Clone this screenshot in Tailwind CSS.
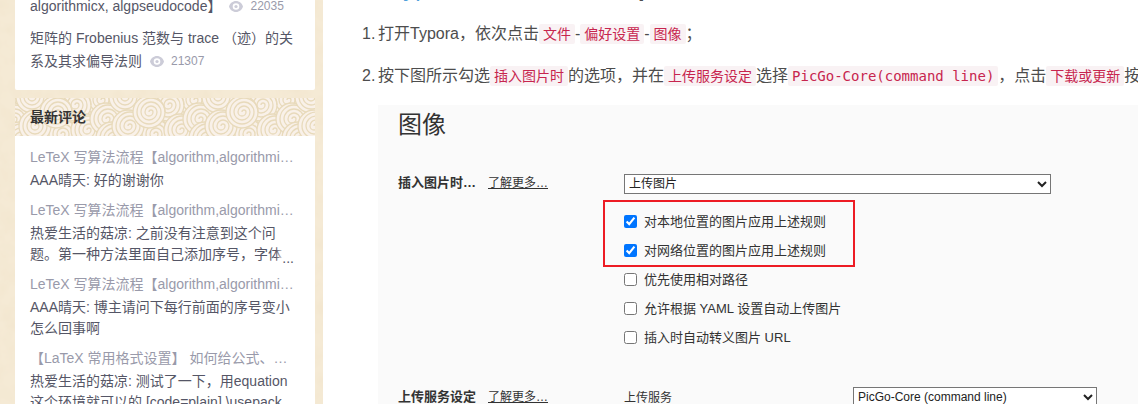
<!DOCTYPE html>
<html lang="zh-CN">
<head>
<meta charset="utf-8">
<title>Typora 图像上传设置</title>
<script src="https://cdn.jsdelivr.net/npm/@tailwindcss/browser@4"></script>
</head>
<body class="h-screen overflow-hidden bg-white font-['Liberation_Sans','Noto_Sans_CJK_SC',sans-serif]">
<div class="flex h-full">
  <aside class="relative isolate w-[323px] shrink-0 overflow-hidden bg-[#f5ead5] pr-2 pl-[15px] text-sm text-[#555666]">
    <!-- paper texture -->
    <svg class="absolute inset-0 -z-10 size-full" aria-hidden="true">
      <filter id="paper"><feTurbulence type="fractalNoise" baseFrequency="0.06" numOctaves="3" seed="4"/><feColorMatrix values="0 0 0 0 0.84  0 0 0 0 0.72  0 0 0 0 0.52  0.5 0 0 0 -0.18"/></filter>
      <rect width="100%" height="100%" filter="url(#paper)"/>
    </svg>
    <section class="-mt-[5px] rounded-b-xs bg-white px-[15px] pb-[17px] leading-[23px]">
      <ul class="flex flex-col gap-[9px]">
        <li class="whitespace-nowrap"><a href="#">algorithmicx, algpseudocode】</a><span class="ml-2 inline-flex items-center gap-[7px] align-top text-xs leading-[23px] text-[#999aaa]"><svg class="h-[11px] w-[14px]" viewBox="0 0 14 11"><path fill="#ccccd8" fill-rule="evenodd" d="M7 0C3.600 0 1 2.300 0 5.500 1 8.700 3.600 11 7 11s6-2.300 7-5.500C13 2.300 10.400 0 7 0Zm0 2.200a3.300 3.300 0 1 1 0 6.600 3.300 3.300 0 0 1 0-6.600Z"/><circle cx="7" cy="5.500" r="1.600" fill="#ccccd8"/></svg>22035</span></li>
        <li><a href="#">矩阵的 Frobenius 范数与 trace （迹）的关系及其求偏导法则</a><span class="ml-2 inline-flex items-center gap-[7px] align-top text-xs leading-[23px] text-[#999aaa]"><svg class="h-[11px] w-[14px]" viewBox="0 0 14 11"><path fill="#ccccd8" fill-rule="evenodd" d="M7 0C3.600 0 1 2.300 0 5.500 1 8.700 3.600 11 7 11s6-2.300 7-5.500C13 2.300 10.400 0 7 0Zm0 2.200a3.300 3.300 0 1 1 0 6.600 3.300 3.300 0 0 1 0-6.600Z"/><circle cx="7" cy="5.500" r="1.600" fill="#ccccd8"/></svg>21307</span></li>
      </ul>
    </section>
    <section class="mt-2 bg-white">
      <div class="relative isolate h-[38px] px-[15px]">
        <svg class="absolute inset-0 -z-10 size-full" aria-hidden="true">
          <defs>
            <g id="s" stroke="#e8dabb" stroke-width="1.300" fill="none">
              <circle r="16" fill="#f9f1e9"/>
              <path d="M0 0A2 2 0 0 1 4 0A4 4 0 0 1-4 0A6 6 0 0 1 8 0A8 8 0 0 1-8 0A10 10 0 0 1 12 0A12 12 0 0 1-12 0A14 14 0 0 1 16 0"/>
            </g>
            <g id="tile">
              <use href="#s" x="4" y="40"/><use href="#s" x="86" y="2"/><use href="#s" x="46" y="36"/><use href="#s" x="38" y="-6"/>
              <use href="#s" x="60" y="7"/><use href="#s" x="17" y="-1"/><use href="#s" x="20" y="28"/>
              <use href="#s" x="72" y="32"/><use href="#s" x="41" y="14"/><use href="#s" x="91" y="21"/>
            </g>
          </defs>
          <rect width="100%" height="100%" fill="#f9f1e9"/>
          <use href="#tile" x="-93"/><use href="#tile"/><use href="#tile" x="93"/><use href="#tile" x="186"/><use href="#tile" x="279"/>
        </svg>
        <h3 class="leading-[38px] font-bold text-[#333]">最新评论</h3>
      </div>
      <ul class="flex flex-col gap-[7px] px-[15px] pt-[9px] leading-[21px]">
        <li><a href="#" class="block w-[264px] truncate leading-[25px] text-[#999aaa]">LeTeX 写算法流程【algorithm,algorithmicx, algpseudocode】</a><p>AAA晴天: 好的谢谢你</p></li>
        <li><a href="#" class="block w-[264px] truncate leading-[25px] text-[#999aaa]">LeTeX 写算法流程【algorithm,algorithmicx, algpseudocode】</a>
          <p class="relative h-[42px] w-[264px]">热爱生活的菇凉: 之前没有注意到这个问题。第一种方法里面自己添加序号，字体<span class="absolute right-0 -bottom-1 bg-linear-to-r from-transparent to-white to-50% pl-1.5">...</span></p></li>
        <li><a href="#" class="block w-[264px] truncate leading-[25px] text-[#999aaa]">LeTeX 写算法流程【algorithm,algorithmicx, algpseudocode】</a><p>AAA晴天: 博主请问下每行前面的序号变小怎么回事啊</p></li>
        <li><a href="#" class="block w-[264px] truncate leading-[25px] text-[#999aaa]">【LaTeX 常用格式设置】 如何给公式、图片、表格编号</a><p class="w-[264px]">热爱生活的菇凉: 测试了一下，用equation<br>这个环境就可以的 [code=plain] \usepack</p></li>
      </ul>
    </section>
  </aside>

  <main class="min-w-0 flex-1 overflow-hidden pl-[55px] text-[#4d4d4d]">
    <h4 class="-mt-7 -ml-3 h-8 text-2xl leading-8 font-bold whitespace-nowrap">在<a href="#" class="font-normal text-[#4ea1db]">Typora</a>中设置图像上传 p 上传服务</h4>
    <ol class="mt-[18px] ml-[-18px] flex flex-col gap-[18px] whitespace-nowrap">
      <li class="flex leading-6"><span class="w-[18px] shrink-0 pl-0.5">1.</span><span>打开Typora，依次点击<code class="rounded-xs bg-[#f9f2f4] px-1 py-0.5 font-['DejaVu_Sans_Mono','Noto_Sans_CJK_SC',monospace] text-sm text-[#c7254e]">文件</code>-<code class="rounded-xs bg-[#f9f2f4] px-1 py-0.5 font-['DejaVu_Sans_Mono','Noto_Sans_CJK_SC',monospace] text-sm text-[#c7254e]">偏好设置</code>-<code class="rounded-xs bg-[#f9f2f4] px-1 py-0.5 font-['DejaVu_Sans_Mono','Noto_Sans_CJK_SC',monospace] text-sm text-[#c7254e]">图像</code>；</span></li>
      <li class="flex leading-6"><span class="w-[18px] shrink-0 pl-0.5">2.</span><span>按下图所示勾选<code class="rounded-xs bg-[#f9f2f4] px-1 py-0.5 font-['DejaVu_Sans_Mono','Noto_Sans_CJK_SC',monospace] text-sm text-[#c7254e]">插入图片时</code>的选项，并在<code class="rounded-xs bg-[#f9f2f4] px-1 py-0.5 font-['DejaVu_Sans_Mono','Noto_Sans_CJK_SC',monospace] text-sm text-[#c7254e]">上传服务设定</code>选择<code class="rounded-xs bg-[#f9f2f4] px-1 py-0.5 font-['DejaVu_Sans_Mono','Noto_Sans_CJK_SC',monospace] text-sm text-[#c7254e]">PicGo-Core(command line)</code>，点击<code class="rounded-xs bg-[#f9f2f4] px-1 py-0.5 font-['DejaVu_Sans_Mono','Noto_Sans_CJK_SC',monospace] text-sm text-[#c7254e]">下载或更新</code>按钮</span></li>
    </ol>
    <section class="mt-[17px] bg-[#fafafa] px-5 pb-10 text-[13px] text-[#333]">
      <h2 class="pt-1 text-2xl leading-8">图像</h2>
      <div class="mt-[33px] grid grid-cols-[90px_136px_1fr]">
        <b class="leading-[18px]">插入图片时…</b>
        <a href="#" class="text-xs leading-[18px] underline">了解更多…</a>
        <div>
          <select aria-label="插入图片时" class="block h-5 w-[427px] max-w-full border border-[#767676] bg-white text-xs text-[#222]"><option>上传图片</option></select>
          <div class="mt-1.5 -ml-[21px] w-[252px] border-2 border-[#ed1c24] pt-[5px] pl-[19px]">
            <label class="flex h-[29px] items-center gap-[7px]"><input type="checkbox" checked class="size-[13px]">对本地位置的图片应用上述规则</label>
            <label class="flex h-[29px] items-center gap-[7px]"><input type="checkbox" checked class="size-[13px]">对网络位置的图片应用上述规则</label>
          </div>
          <label class="-mt-0.5 flex h-[29px] items-center gap-[7px]"><input type="checkbox" class="size-[13px]">优先使用相对路径</label>
          <label class="flex h-[29px] items-center gap-[7px]"><input type="checkbox" class="size-[13px]">允许根据 YAML 设置自动上传图片</label>
          <label class="flex h-[29px] items-center gap-[7px]"><input type="checkbox" class="size-[13px]">插入时自动转义图片 URL</label>
        </div>
      </div>
      <div class="mt-[35px] grid grid-cols-[90px_136px_229px_1fr]">
        <b class="leading-5">上传服务设定</b>
        <a href="#" class="text-xs leading-5 underline">了解更多…</a>
        <label for="svc" class="text-xs leading-[22px]">上传服务</label>
        <select id="svc" class="h-5 w-[244px] max-w-full border border-[#767676] bg-white text-xs text-[#222]"><option>PicGo-Core (command line)</option></select>
      </div>
    </section>
  </main>
</div>
</body>
</html>
